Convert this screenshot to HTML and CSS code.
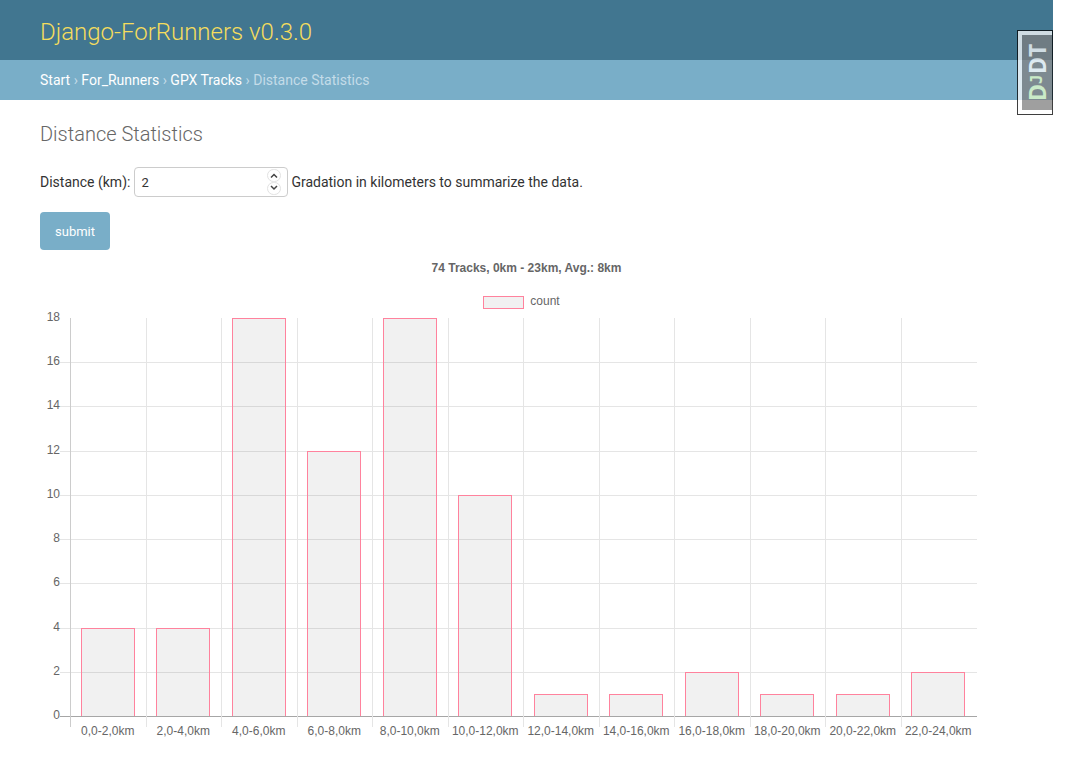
FILE: index.html
```html
<!DOCTYPE html>
<html lang="en">
<head>
<meta charset="utf-8">
<title>Distance Statistics</title>
<link rel="stylesheet" href="styles.css">
</head>
<body>
<div class="page">
  <header class="site-header"><a class="brand" href="#">Django-ForRunners v0.3.0</a></header>
  <nav class="breadcrumbs" aria-label="Breadcrumbs">
    <a href="#">Start</a> › <a href="#">For_Runners</a> › <a href="#">GPX Tracks</a> › Distance Statistics
  </nav>
  <main class="content">
    <h1>Distance Statistics</h1>
    <form class="filter">
      <div class="field">
        <label for="distance">Distance (km):</label>
        <span class="number">
          <input id="distance" type="number" value="2">
          <span class="spinner">
            <button type="button" aria-label="Increase"><svg viewBox="0 0 12 11"><path d="M3 7.500 6 4.500 9 7.500"/></svg></button>
            <button type="button" aria-label="Decrease"><svg viewBox="0 0 12 11"><path d="M3 3 6 6 9 3"/></svg></button>
          </span>
        </span>
        <span>Gradation in kilometers to summarize the data.</span>
      </div>
      <button class="submit" type="submit">submit</button>
    </form>
    <section class="chart">
      <h2>74 Tracks, 0km - 23km, Avg.: 8km</h2>
      <div class="legend"><span class="swatch"></span><span>count</span></div>
      <div class="graph">
        <div class="y-axis"><span>18</span><span>16</span><span>14</span><span>12</span><span>10</span><span>8</span><span>6</span><span>4</span><span>2</span><span>0</span></div>
        <div class="plot">
          <div class="rules"><i></i><i></i><i></i><i></i><i></i><i></i><i></i><i></i><i></i></div>
          <div class="bars">
            <div class="col"><div class="bar" style="height:22.222%"></div></div>
            <div class="col"><div class="bar" style="height:22.222%"></div></div>
            <div class="col"><div class="bar" style="height:100%"></div></div>
            <div class="col"><div class="bar" style="height:66.667%"></div></div>
            <div class="col"><div class="bar" style="height:100%"></div></div>
            <div class="col"><div class="bar" style="height:55.556%"></div></div>
            <div class="col"><div class="bar" style="height:5.556%"></div></div>
            <div class="col"><div class="bar" style="height:5.556%"></div></div>
            <div class="col"><div class="bar" style="height:11.111%"></div></div>
            <div class="col"><div class="bar" style="height:5.556%"></div></div>
            <div class="col"><div class="bar" style="height:5.556%"></div></div>
            <div class="col"><div class="bar" style="height:11.111%"></div></div>
          </div>
        </div>
        <div class="x-axis"><span>0,0-2,0km</span><span>2,0-4,0km</span><span>4,0-6,0km</span><span>6,0-8,0km</span><span>8,0-10,0km</span><span>10,0-12,0km</span><span>12,0-14,0km</span><span>14,0-16,0km</span><span>16,0-18,0km</span><span>18,0-20,0km</span><span>20,0-22,0km</span><span>22,0-24,0km</span></div>
      </div>
    </section>
  </main>
  <a class="debug-handle" href="#" title="Show toolbar"><span class="debug-label"><span class="debug-dj">D<small>J</small></span>DT</span></a>
</div>
</body>
</html>
```

FILE: styles.css
```css
* { box-sizing: border-box; }
body { margin: 0; background: #fff; color: #333; font: 14px/20px Roboto, sans-serif; }
a { text-decoration: none; }
.page { position: relative; margin-right: 14px; }
.site-header { display: flex; align-items: center; height: 60px; padding: 4px 40px 0; background: #417690; }
.brand { color: #f5dd5d; font-size: 24px; font-weight: 300; line-height: 28px; }
.breadcrumbs { padding: 10px 40px; background: #79aec8; color: #c4dce8; }
.breadcrumbs a { color: #fff; }
.content { padding: 20px 40px; }
h1 { margin: 0; color: #666; font-size: 20px; font-weight: 300; line-height: 28px; }
.filter { display: flex; flex-direction: column; align-items: flex-start; gap: 15px; margin-top: 19px; }
.field { display: flex; align-items: center; gap: 3px; }
.field label { margin-right: 1px; }
.number { display: flex; align-items: center; width: 154px; height: 30px; padding: 0 6px; border: 1px solid #ccc; border-radius: 4px; background: #fff; }
.number input { flex: 1; min-width: 0; padding: 2px 0 0; border: 0; outline: 0; color: #333; font: 13px/16px Roboto, sans-serif; appearance: textfield; }
.number input::-webkit-inner-spin-button { display: none; }
.spinner { display: flex; flex-direction: column; }
.spinner button { display: flex; width: 14px; height: 13px; padding: 0; border: 1px solid #e2e2e2; border-radius: 7px; background: #fff; }
.spinner svg { width: 12px; height: 11px; fill: none; stroke: #444; stroke-width: 1.5; }
.submit { padding: 11px 15px 9px; border: 0; border-radius: 4px; background: #79aec8; color: #fff; font: 13px/18px Roboto, sans-serif; }
.chart { margin-top: 10px; color: #666; font: 12px/14px "Liberation Sans", Arial, sans-serif; }
h2 { margin: 0; font-size: 12px; line-height: 16px; text-align: center; }
.legend { display: flex; justify-content: center; gap: 6px; margin: 18px 10px 0 0; }
.swatch { width: 41px; height: 13px; margin-top: 2px; border: 1px solid #ff829d; background: #f1f1f1; }
.graph { display: grid; grid-template-columns: 20px 1fr; margin: 9px 36px 0 0; }
.y-axis { display: flex; flex-direction: column; justify-content: space-between; height: 412px; margin: -8px 0 -5px; text-align: right; }
.plot { position: relative; height: 399px; padding-left: 10px; }
.bars { position: relative; display: grid; grid-template-columns: repeat(12, 1fr); height: 409px; padding-right: 1px; }
.col { display: flex; align-items: flex-end; justify-content: center; padding: 0 1px 11px 0; border-left: 1px solid #e5e5e5; }
.col:first-child { border-color: #ccc; }
.bar { width: 54px; border: 1px solid #ff829d; border-bottom: 0; background: rgba(0,0,0,.055); }
.rules { position: absolute; inset: 0; display: flex; flex-direction: column; border-bottom: 1px solid rgba(0,0,0,.35); }
.rules i { flex: 1; border-top: 1px solid rgba(0,0,0,.1); }
.rules i:first-child { border-color: transparent; }
.x-axis { grid-column: 2; display: grid; grid-template-columns: repeat(12, 1fr); margin-top: 7px; padding: 0 1px 0 10px; white-space: nowrap; }
.x-axis span { display: flex; justify-content: center; }
.debug-handle { position: absolute; top: 30px; right: 0; width: 36px; height: 85px; padding: 4px 0 4px 4px; border: 1px solid #000; background: #fff; opacity: .75; }
.debug-label { display: flex; align-items: baseline; justify-content: center; height: 100%; background: #7f7f7f; color: #fff; font: bold 23px/30px "Open Sans", sans-serif; writing-mode: vertical-rl; transform: rotate(180deg); }
.debug-dj { color: #e4fec8; }
.debug-dj small { font: bold 16px/16px "DejaVu Sans Mono", monospace; }
```
